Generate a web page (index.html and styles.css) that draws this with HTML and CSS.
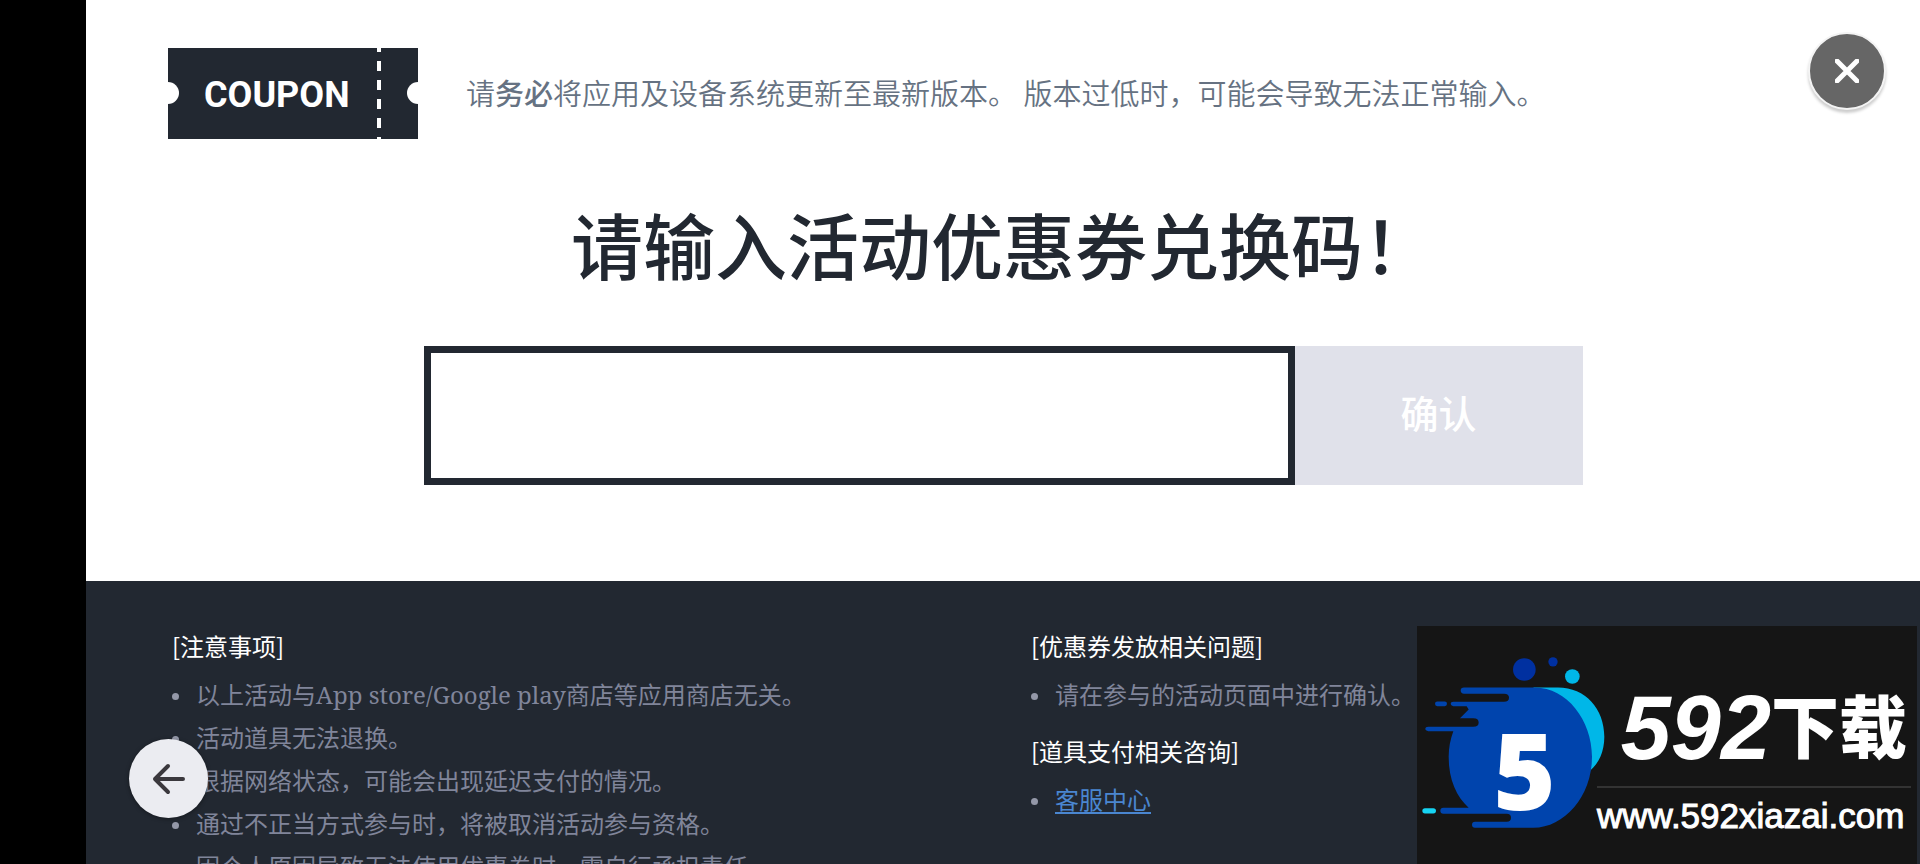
FILE: index.html
```html
<!DOCTYPE html>
<html lang="zh-CN">
<head>
    <meta charset="UTF-8">
    <title>优惠券兑换</title>
    <meta name="viewport" content="width=device-width, initial-scale=1.0">
    <link rel="stylesheet" href="styles.css">
</head>
<body>
    <div class="page">
        <main class="main">
            <header class="top">
                <svg class="coupon-logo" viewBox="0 0 250 91" role="img" aria-label="COUPON">
                    <rect width="250" height="91" fill="#222831"/>
                    <circle cx="0" cy="45" r="11" fill="#fff"/>
                    <circle cx="250" cy="45" r="11" fill="#fff"/>
                    <path d="M211 0V91" stroke="#fff" stroke-width="4" stroke-dasharray="10 9" stroke-dashoffset="6"/>
                    <text class="coupon-text" x="36" y="59">COUPON</text>
                </svg>
                <p class="top-note">请<b>务必</b>将应用及设备系统更新至最新版本。 版本过低时，可能会导致无法正常输入。</p>
            </header>
            <h1 class="title"><label for="code">请输入活动优惠券兑换码！</label></h1>
            <form class="coupon-form">
                <input class="code-input" id="code" type="text" autocomplete="off">
                <button class="submit-btn" type="button">确认</button>
            </form>
        </main>

        <footer class="notice">
            <section class="notice-col">
                <h2>[注意事项]</h2>
                <ul>
                    <li>以上活动与App store/Google play商店等应用商店无关。</li>
                    <li>活动道具无法退换。</li>
                    <li>根据网络状态，可能会出现延迟支付的情况。</li>
                    <li>通过不正当方式参与时，将被取消活动参与资格。</li>
                    <li>因个人原因导致无法使用优惠券时，需自行承担责任。</li>
                </ul>
            </section>
            <section class="notice-col">
                <h2>[优惠券发放相关问题]</h2>
                <ul>
                    <li>请在参与的活动页面中进行确认。</li>
                </ul>
                <h2>[道具支付相关咨询]</h2>
                <ul>
                    <li><a href="#">客服中心</a></li>
                </ul>
            </section>
        </footer>
    </div>

    <!-- 悬浮按钮 -->
    <button class="close-btn" type="button" aria-label="关闭">
        <svg viewBox="0 0 24 24" width="24" height="24"><path d="M2 2L22 22M22 2L2 22" stroke="#fff" stroke-width="5" stroke-linecap="round"/></svg>
    </button>
    <button class="back-btn" type="button" aria-label="返回">
        <svg viewBox="0 0 34 32" width="34" height="32"><path d="M31 16H3M16 3L3 16L16 29" fill="none" stroke="#3a383d" stroke-width="4" stroke-linecap="round" stroke-linejoin="round"/></svg>
    </button>

    <!-- 站点标识 -->
    <div class="site-mark">
        <svg class="site-logo" viewBox="21 30 540 560" aria-hidden="true">
            <path d="M370 142H440C525 140 583 205 583 290C583 335 566 370 540 392Z" fill="#00b7e8"/>
            <path d="M162 142H375C470 142 546 240 546 350C546 470 462 563 370 563H195Q186 563 186 554Q186 545 195 545H290Q303 545 303 533Q303 521 290 521H100Q91 521 91 512Q91 503 100 503H176C140 470 116 420 116 350Q116 310 130 273H55Q46 272 46 266Q46 260 55 260H190Q206 260 206 247Q206 234 190 234H150L176 208L170 198H130Q122 197 122 191Q122 185 130 185H282Q297 185 297 173Q297 161 282 161H162Q152 160 152 151Q152 142 162 142Z" fill="#0044ad"/>
            <rect x="75" y="184" width="36" height="14" rx="7" fill="#0044ad"/>
            <rect x="37" y="504" width="41" height="16" rx="8" fill="#16d3f2"/>
            <circle cx="343" cy="88" r="34" fill="#0030a0"/>
            <circle cx="429" cy="65" r="14" fill="#0030a0"/>
            <circle cx="487" cy="109" r="22" fill="#00b7e8"/>
            <text class="logo-num" x="250" y="510">5</text>
        </svg>
        <div class="site-info">
            <div class="site-name"><span class="site-num">592</span>下载</div>
            <div class="site-url">www.592xiazai.com</div>
        </div>
    </div>
</body>
</html>
```
FILE: styles.css
```css
* {
    box-sizing: border-box;
}
html, body {
    height: 100%;
    margin: 0;
    overflow: hidden;
}
body {
    background: #000;
    font-family: "Noto Sans CJK SC", sans-serif;
    color: #222831;
}
.page {
    display: flex;
    flex-direction: column;
    min-height: 100vh;
    margin-left: 86px;
    background: #fff;
}
.main {
    padding: 48px 82px 96px;
}
.top {
    display: flex;
    align-items: center;
    gap: 48px;
}
.coupon-logo {
    flex: none;
    width: 250px;
    height: 91px;
}
.coupon-text {
    font-family: Roboto, sans-serif;
    font-size: 36px;
    font-weight: 700;
    fill: #fff;
}
.top-note {
    margin: 0;
    padding-bottom: 4px;
    font-size: 29px;
    font-weight: 350;
    color: #667282;
}
.top-note b {
    font-weight: 500;
}
.title {
    margin: 50px 0 49px;
    font-size: 72px;
    font-weight: 500;
    line-height: 108px;
    text-align: center;
}
.coupon-form {
    display: flex;
    max-width: 1159px;
    height: 139px;
    margin: 0 auto;
}
.code-input {
    flex: 1;
    min-width: 0;
    padding: 0 32px;
    border: 7px solid #222831;
    border-radius: 0;
    background: #fff;
    font: inherit;
    font-size: 36px;
    outline: none;
}
.submit-btn {
    width: 288px;
    padding: 0 0 8px;
    border: 0;
    background: #e0e1ea;
    color: #fff;
    font: inherit;
    font-size: 38px;
    font-weight: 500;
}

/* 底部说明 */
.notice {
    flex: 1;
    display: grid;
    grid-template-columns: 1fr 1fr;
    gap: 56px;
    padding: 43px 86px;
    background: #222831;
}
.notice h2 {
    margin: 0;
    font-size: 24px;
    font-weight: 400;
    line-height: 43px;
    color: #fff;
}
.notice ul {
    margin: 6px 0 13px;
    padding: 0;
    list-style: none;
    font-family: "Noto Serif", "Noto Sans CJK SC", serif;
    font-size: 24px;
    font-weight: 400;
    line-height: 43px;
    color: #80859a;
}
.notice li {
    display: flex;
    align-items: center;
    gap: 17px;
    height: 43px;
}
.notice li::before {
    content: "";
    flex: none;
    width: 7px;
    height: 7px;
    margin-top: 3px;
    border-radius: 50%;
    background: #9498a8;
}
.notice a {
    color: #4a86d0;
    text-decoration-thickness: 2px;
    text-underline-offset: 3px;
}

.close-btn,
.back-btn {
    position: fixed;
    display: flex;
    align-items: center;
    justify-content: center;
    padding: 0;
    border-radius: 50%;
}
.close-btn {
    top: 32px;
    right: 34px;
    width: 78px;
    height: 78px;
    border: 2px solid #f4f4f4;
    background: #666;
    box-shadow: 0 3px 3px rgba(0, 0, 0, 0.2);
}
.back-btn {
    left: 129px;
    bottom: 46px;
    width: 79px;
    height: 79px;
    border: 0;
    background: #ebecf1;
    box-shadow: 0 1px 4px rgba(0, 0, 0, 0.4);
}

.site-mark {
    position: fixed;
    right: 3px;
    bottom: 0;
    display: flex;
    width: 500px;
    height: 238px;
    padding-top: 24px;
    background: #151515;
    color: #fff;
}
.site-logo {
    flex: none;
    width: 180px;
    height: 187px;
    overflow: visible;
}
.logo-num {
    font-family: "Open Sans", sans-serif;
    font-size: 320px;
    font-weight: 800;
    fill: #fff;
}
.site-info {
    flex: 1;
    padding-top: 30px;
}
.site-name {
    display: flex;
    align-items: center;
    justify-content: flex-end;
    height: 108px;
    margin-right: 6px;
    padding-right: 4px;
    padding-bottom: 18px;
    border-bottom: 2px solid #333;
    font-size: 68px;
    font-weight: 900;
    line-height: 82px;
}
.site-num {
    padding-top: 8px;
    font-family: "Liberation Sans", sans-serif;
    font-size: 90px;
    font-style: italic;
    font-weight: 700;
}
.site-url {
    font-family: "Liberation Sans", sans-serif;
    font-size: 35px;
    line-height: 56px;
    -webkit-text-stroke: 1px #fff;
}
```
